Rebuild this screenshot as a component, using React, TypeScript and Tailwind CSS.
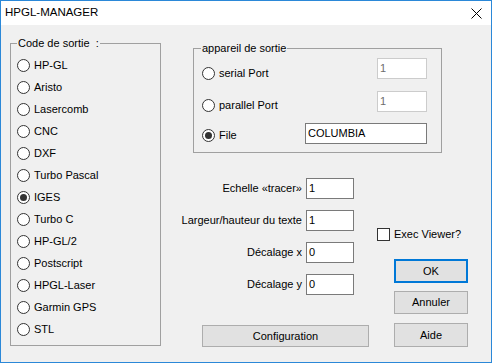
import React from "react";

const formats = [
  "HP-GL",
  "Aristo",
  "Lasercomb",
  "CNC",
  "DXF",
  "Turbo Pascal",
  "IGES",
  "Turbo C",
  "HP-GL/2",
  "Postscript",
  "HPGL-Laser",
  "Garmin GPS",
  "STL",
];

function Radio({ checked }: { checked?: boolean }) {
  return (
    <span className="flex h-[13px] w-[13px] shrink-0 items-center justify-center rounded-full border border-[#333333] bg-white">
      {checked && <span className="h-[7px] w-[7px] rounded-full bg-[#333333]" />}
    </span>
  );
}

function RadioLabel({ label, checked }: { label: string; checked?: boolean }) {
  return (
    <div className="flex h-[13px] items-center gap-[4px] leading-[13px] whitespace-nowrap">
      <Radio checked={checked} />
      <span>{label}</span>
    </div>
  );
}

function Field({ value, disabled, w }: { value: string; disabled?: boolean; w: string }) {
  return (
    <div
      className={`flex h-[21px] shrink-0 items-center bg-white pl-[2px] leading-[13px] ${w} ${
        disabled ? "border border-[#cccccc] text-[#6d6d6d]" : "border border-[#7a7a7a]"
      }`}
    >
      {value}
    </div>
  );
}

function ValueRow({ label, value, first }: { label: string; value: string; first?: boolean }) {
  return (
    <div className={`flex h-[21px] items-center justify-end gap-[4px] pr-[15px] ${first ? "" : "mt-[11px]"}`}>
      <span className="shrink-0 leading-[13px] whitespace-nowrap">{label}</span>
      <Field value={value} w="w-[48px]" />
    </div>
  );
}

export default function App() {
  return (
    <div
      className="flex h-[363px] w-[492px] flex-col border border-[#2b88d8] bg-[#f0f0f0] text-[11px] text-black"
      style={{ fontFamily: '"Liberation Sans", Arial, sans-serif' }}
    >
      <div className="flex h-[24px] shrink-0 items-center justify-between bg-white pl-[4px] pr-[9px]">
        <span className="text-[11.5px]">HPGL-MANAGER</span>
        <svg width="11" height="11" viewBox="0 0 11 11" className="text-black">
          <path d="M0.5 0.5 L10.5 10.5 M10.5 0.5 L0.5 10.5" stroke="currentColor" strokeWidth="1" fill="none" />
        </svg>
      </div>

      <div className="flex flex-1 pl-[9px]">
        {/* Code de sortie */}
        <div className="mt-[18px] h-[303px] w-[151px] border border-[#a0a0a0]">
          <div className="-mt-[7px] ml-[6px] w-fit bg-[#f0f0f0] px-[1px] leading-[13px] whitespace-pre">
            Code de sortie  :
          </div>
          <div className="mt-[4px] flex flex-col pl-[6px]">
            {formats.map((f) => (
              <div key={f} className="flex h-[22px] items-center">
                <RadioLabel label={f} checked={f === "IGES"} />
              </div>
            ))}
          </div>
        </div>

        <div className="ml-[32px] flex flex-col">
          {/* appareil de sortie */}
          <div className="mt-[23px] h-[105px] w-[249px] border border-[#a0a0a0]">
            <div className="-mt-[7px] ml-[7px] w-fit bg-[#f0f0f0] px-[1px] leading-[13px]">
              appareil de sortie
            </div>
            <div className="mt-[3px] flex items-start pl-[8px] pr-[14px]">
              <div className="mt-[9px]">
                <RadioLabel label="serial Port" />
              </div>
              <div className="ml-auto">
                <Field value="1" disabled w="w-[50px]" />
              </div>
            </div>
            <div className="mt-[11px] flex items-start pl-[8px] pr-[14px]">
              <div className="mt-[8px]">
                <RadioLabel label="parallel Port" />
              </div>
              <div className="ml-auto">
                <Field value="1" disabled w="w-[50px]" />
              </div>
            </div>
            <div className="mt-[11px] flex items-start pl-[8px] pr-[14px]">
              <div className="mt-[6px]">
                <RadioLabel label="File" checked />
              </div>
              <div className="ml-auto">
                <Field value="COLUMBIA" w="w-[122px]" />
              </div>
            </div>
          </div>

          <div className="mt-[25px] flex items-start">
            <div className="flex w-[176px] flex-col">
              <ValueRow label="Echelle «tracer»" value="1" first />
              <ValueRow label="Largeur/hauteur du texte" value="1" />
              <ValueRow label="Décalage x" value="0" />
              <ValueRow label="Décalage y" value="0" />
              <button className="ml-[9px] mt-[30px] flex h-[22px] w-[167px] items-center justify-center border border-[#adadad] bg-[#e1e1e1]">
                Configuration
              </button>
            </div>

            <div className="ml-[8px] flex flex-col">
              <label className="mt-[50px] flex h-[13px] items-center gap-[4px] leading-[13px] whitespace-nowrap">
                <span className="h-[13px] w-[13px] shrink-0 border border-[#333333] bg-white" />
                <span>Exec Viewer?</span>
              </label>
              <button className="ml-[17px] mt-[18px] flex h-[24px] w-[74px] items-center justify-center border-2 border-[#0078d7] bg-[#e1e1e1]">
                OK
              </button>
              <button className="ml-[17px] mt-[8px] flex h-[23px] w-[74px] items-center justify-center border border-[#adadad] bg-[#e1e1e1]">
                Annuler
              </button>
              <button className="ml-[17px] mt-[9px] flex h-[24px] w-[74px] items-center justify-center border border-[#adadad] bg-[#e1e1e1]">
                Aide
              </button>
            </div>
          </div>
        </div>
      </div>
    </div>
  );
}
